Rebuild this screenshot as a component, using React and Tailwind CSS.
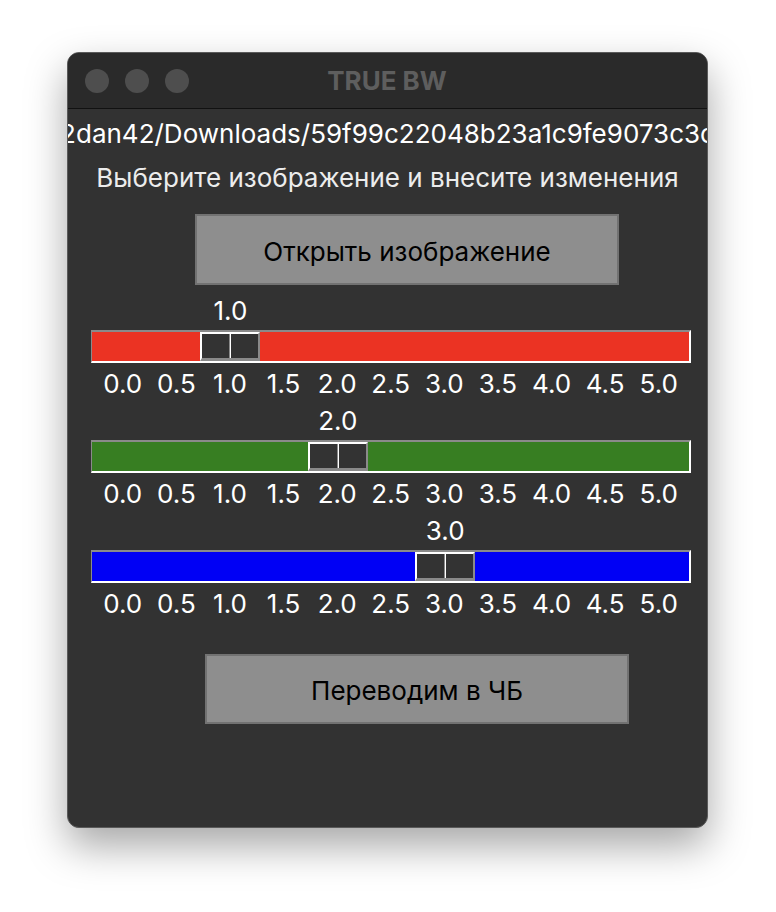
const sliders = [
  { value: 1.0, color: "bg-[#eb3323]" },
  { value: 2.0, color: "bg-[#377e22]" },
  { value: 3.0, color: "bg-[#0000f5]" },
];

const ticks = ["0.0", "0.5", "1.0", "1.5", "2.0", "2.5", "3.0", "3.5", "4.0", "4.5", "5.0"];

function Scale({ value, color, first }) {
  const left = 1 + value * 107.4;
  return (
    <div className={first ? "mt-[11px] ml-[23px] w-[600px]" : "mt-[7px] ml-[23px] w-[600px]"}>
      <div style={{ paddingLeft: left + 1 }}>
        <div className="w-[60px] text-center text-[26px] leading-[30px] text-white">
          {value.toFixed(1)}
        </div>
      </div>
      {/* trough */}
      <div
        className={`relative mt-[4px] h-[33px] w-[600px] border-t-2 border-l border-r-2 border-b-2 border-t-[#8a8a8a] border-l-[#8a8a8a] border-r-white border-b-white ${color}`}
      >
        <div
          className="absolute top-0 bottom-0 flex w-[60px] border-t-2 border-l-2 border-b-[3px] border-r-2 border-t-white border-l-white border-b-[#8a8a8a] border-r-[#8a8a8a] bg-[#333333]"
          style={{ left }}
        >
          <div className="flex-1 border-r border-r-[#8a8a8a]" />
          <div className="flex-1 border-l border-l-white" />
        </div>
      </div>
      <div className="mt-[6px] flex pl-[5px] text-[26px] leading-[30px] text-white">
        {ticks.map((t) => (
          <div key={t} className="w-[53.6px] shrink-0 text-center">
            {t}
          </div>
        ))}
      </div>
    </div>
  );
}

export default function App() {
  return (
    <div
      className="min-h-[912px] w-[776px] bg-white pt-[52px] pl-[67px]"
      style={{ fontFamily: "Inter, 'Noto Sans', sans-serif" }}
    >
      <div className="flex h-[776px] w-[641px] flex-col overflow-hidden rounded-[12px] border border-[#5a5a5a] bg-[#323232] shadow-[0_18px_40px_rgba(0,0,0,0.35)]">
        {/* title bar */}
        <div className="relative flex h-[56px] shrink-0 items-center border-b border-b-[#111] bg-[#2a2a2a] pl-[17px]">
          <div className="flex gap-[16px]">
            <span className="h-[24px] w-[24px] rounded-full bg-[#4e4e4e]" />
            <span className="h-[24px] w-[24px] rounded-full bg-[#4e4e4e]" />
            <span className="h-[24px] w-[24px] rounded-full bg-[#4e4e4e]" />
          </div>
          <div className="flex-1 pr-[122px] text-center text-[26px] font-bold text-[#5e5e5e]">
            TRUE BW
          </div>
        </div>

        {/* content */}
        <div className="flex flex-col overflow-hidden pt-[10px]">
          <div className="flex justify-center overflow-hidden">
            <span className="whitespace-nowrap text-[26px] leading-[30px] text-white">
              2dan42/Downloads/59f99c22048b23a1c9fe9073c3c
            </span>
          </div>
          <div className="mt-[14px] text-center text-[26px] leading-[30px] text-[#ececec]">
            Выберите изображение и внесите изменения
          </div>
          <button className="mt-[21px] ml-[127px] h-[71px] w-[424px] border-2 border-[#727272] bg-[#8e8e8e] pt-[4px] text-[26px] text-black">
            Открыть изображение
          </button>

          {sliders.map((s, i) => (
            <Scale key={i} value={s.value} color={s.color} first={i === 0} />
          ))}

          <button className="mt-[35px] ml-[137px] h-[70px] w-[424px] border-2 border-[#727272] bg-[#8e8e8e] pt-[3px] text-[26px] text-black">
            Переводим в ЧБ
          </button>
        </div>
      </div>
    </div>
  );
}
